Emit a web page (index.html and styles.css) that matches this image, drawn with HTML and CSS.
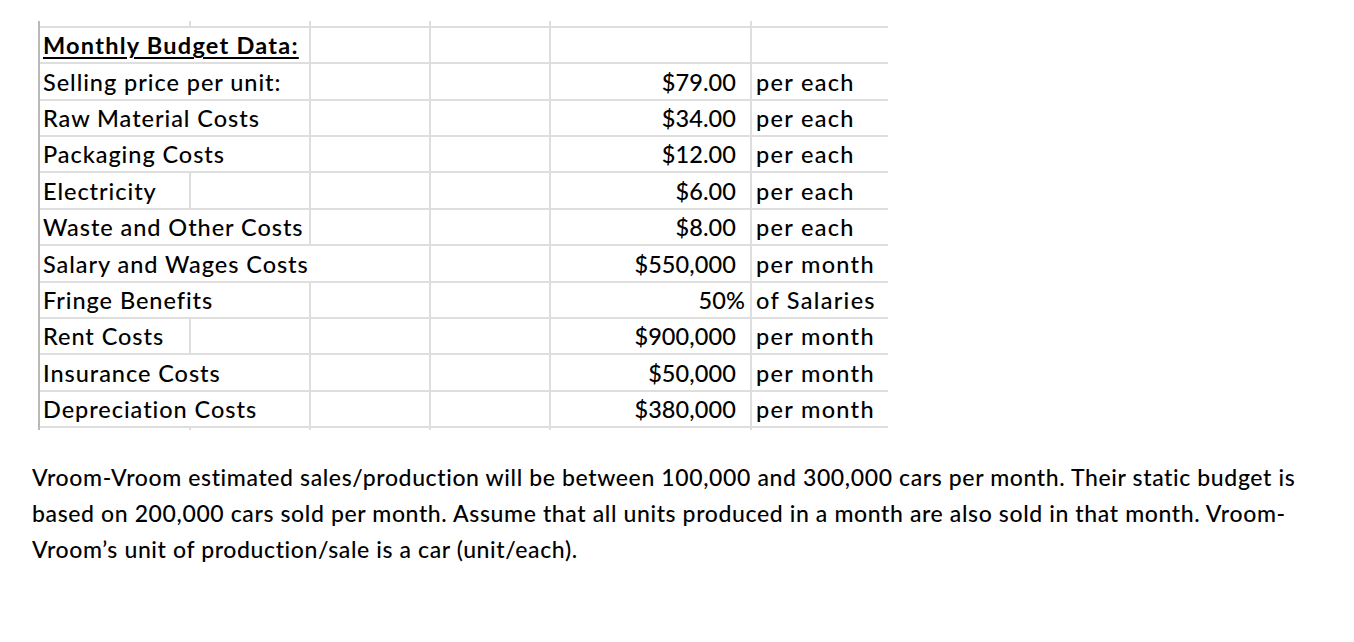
FILE: index.html
```html
<!DOCTYPE html>
<html lang="en">
<head>
<meta charset="utf-8">
<title>Monthly Budget Data</title>
<link rel="stylesheet" href="styles.css">
</head>
<body>
<div class="page">
  <div class="sheet">
    <!-- top strip -->
    <div class="c strip"></div><div class="c strip"></div><div class="c strip"></div><div class="c strip"></div><div class="c strip"></div><div class="c strip last"></div>

    <div class="c label head span2"><span class="u">Monthly Budget Data:</span></div><div class="c"></div><div class="c"></div><div class="c"></div><div class="c last"></div>

    <div class="c label span2">Selling price per unit:</div><div class="c"></div><div class="c"></div><div class="c num">$79.00</div><div class="c unit last">per each</div>

    <div class="c label span2">Raw Material Costs</div><div class="c"></div><div class="c"></div><div class="c num">$34.00</div><div class="c unit last">per each</div>

    <div class="c label span2">Packaging Costs</div><div class="c"></div><div class="c"></div><div class="c num">$12.00</div><div class="c unit last">per each</div>

    <div class="c label">Electricity</div><div class="c"></div><div class="c"></div><div class="c"></div><div class="c num">$6.00</div><div class="c unit last">per each</div>

    <div class="c label span2">Waste and Other Costs</div><div class="c"></div><div class="c"></div><div class="c num">$8.00</div><div class="c unit last">per each</div>

    <div class="c label span3">Salary and Wages Costs</div><div class="c"></div><div class="c num">$550,000</div><div class="c unit last">per month</div>

    <div class="c label span2">Fringe Benefits</div><div class="c"></div><div class="c"></div><div class="c num pct">50%</div><div class="c unit last">of Salaries</div>

    <div class="c label">Rent Costs</div><div class="c"></div><div class="c"></div><div class="c"></div><div class="c num">$900,000</div><div class="c unit last">per month</div>

    <div class="c label span2">Insurance Costs</div><div class="c"></div><div class="c"></div><div class="c num">$50,000</div><div class="c unit last">per month</div>

    <div class="c label span2">Depreciation Costs</div><div class="c"></div><div class="c"></div><div class="c num">$380,000</div><div class="c unit last">per month</div>

    <!-- bottom strip -->
    <div class="c foot"></div><div class="c foot"></div><div class="c foot"></div><div class="c foot"></div><div class="c foot"></div><div class="c foot last"></div>
  </div>

  <p class="note">Vroom-Vroom estimated sales/production will be between 100,000 and 300,000 cars per month. Their static budget is<br>based on 200,000 cars sold per month. Assume that all units produced in a month are also sold in that month. Vroom-<br>Vroom’s unit of production/sale is a car (unit/each).</p>
</div>
</body>
</html>
```
FILE: styles.css
```css
html, body {
  margin: 0;
  padding: 0;
  background: #ffffff;
}

body {
  font-family: "Lato", "Carlito", "Liberation Sans", sans-serif;
  font-weight: 500;
  font-variant-ligatures: none;
  color: #000000;
}

.page {
  padding: 21px 0 0 32px;
}

.sheet {
  margin-left: 6px;
  width: 850px;
  display: grid;
  grid-template-columns: 151px 120px 120px 120px 201px 136px;
  grid-template-rows: 7px repeat(11, 36.36px) 2px;
  border-left: 2px solid #b9b9b9;
  font-size: 23.5px;
  letter-spacing: 0.95px;
}

.c {
  border-right: 2px solid #dedede;
  border-bottom: 2px solid #dedede;
  display: flex;
  align-items: flex-end;
  padding-bottom: 3px;
  white-space: nowrap;
  line-height: 28px;
  box-sizing: border-box;
  min-width: 0;
}

.c.last {
  border-right: none;
}

.c.strip {
  padding-bottom: 0;
}

.c.foot {
  border-bottom: none;
  padding-bottom: 0;
}

.span2 { grid-column: span 2; }
.span3 { grid-column: span 3; }

.label {
  padding-left: 3px;
}

.head {
  font-weight: 700;
  letter-spacing: 1.25px;
}

.u {
  text-decoration: underline;
  text-decoration-thickness: 2px;
  text-underline-offset: 3px;
}

.num {
  justify-content: flex-end;
  padding-right: 14px;
  letter-spacing: 0.1px;
}

.num.pct {
  padding-right: 5px;
}

.unit {
  padding-left: 4px;
  letter-spacing: 1.3px;
}

.note {
  margin: 29px 0 0 0;
  font-size: 23px;
  letter-spacing: 0.62px;
  line-height: 36px;
}
```
